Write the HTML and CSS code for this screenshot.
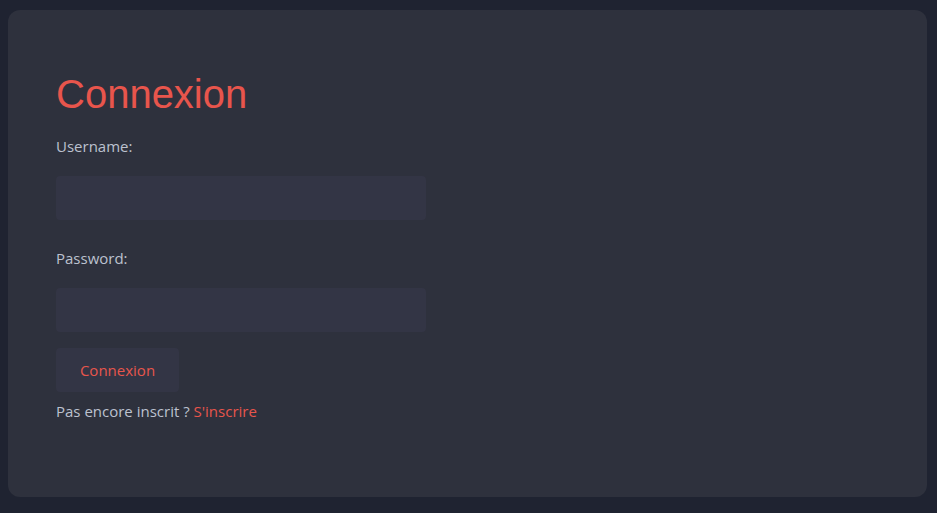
FILE: index.html
```html
<!DOCTYPE html>
<html lang="fr">
<head>
<meta charset="utf-8">
<title>Connexion</title>
<link rel="stylesheet" href="styles.css">
</head>
<body>
<main class="card">
  <h1 class="title">Connexion</h1>
  <form class="form">
    <div class="field">
      <label class="label" for="username">Username:</label>
      <input class="input" type="text" id="username">
    </div>
    <div class="field field-last">
      <label class="label" for="password">Password:</label>
      <input class="input" type="password" id="password">
    </div>
    <button class="btn" type="button">Connexion</button>
  </form>
  <p class="note">Pas encore inscrit ? <a class="link" href="#">S'inscrire</a></p>
</main>
</body>
</html>
```

FILE: styles.css
```css
html, body {
  background: #1f2331;
}
body {
  margin: 10px 10px 17px 8px;
  font-family: "Open Sans", "Noto Sans", sans-serif;
  font-size: 15px;
  color: #bcc1cf;
}
.card {
  background: #2e313d;
  border-radius: 12px;
  padding: 48px 48px 76px 48px;
}
.title {
  font-family: "Liberation Sans", Arial, sans-serif;
  font-weight: 400;
  font-size: 40px;
  line-height: 46px;
  color: #e8554c;
  margin: 13px 0 19px;
}
.form {
  display: flex;
  flex-direction: column;
  align-items: flex-start;
}
.field {
  display: flex;
  flex-direction: column;
  gap: 20px;
  margin-bottom: 28px;
}
.field-last {
  margin-bottom: 16px;
}
.label {
  line-height: 20px;
}
.input {
  box-sizing: border-box;
  width: 370px;
  height: 44px;
  background: #333545;
  border: none;
  border-radius: 4px;
  outline: none;
  color: #bcc1cf;
  font: inherit;
  padding: 0 12px;
}
.btn {
  box-sizing: border-box;
  width: 123px;
  height: 44px;
  background: #333545;
  border: none;
  border-radius: 4px;
  color: #e8554c;
  font-family: inherit;
  font-size: 15px;
  cursor: pointer;
}
.note {
  margin: 9px 0 0;
  line-height: 20px;
}
.link {
  color: #e8554c;
  text-decoration: none;
}
```
